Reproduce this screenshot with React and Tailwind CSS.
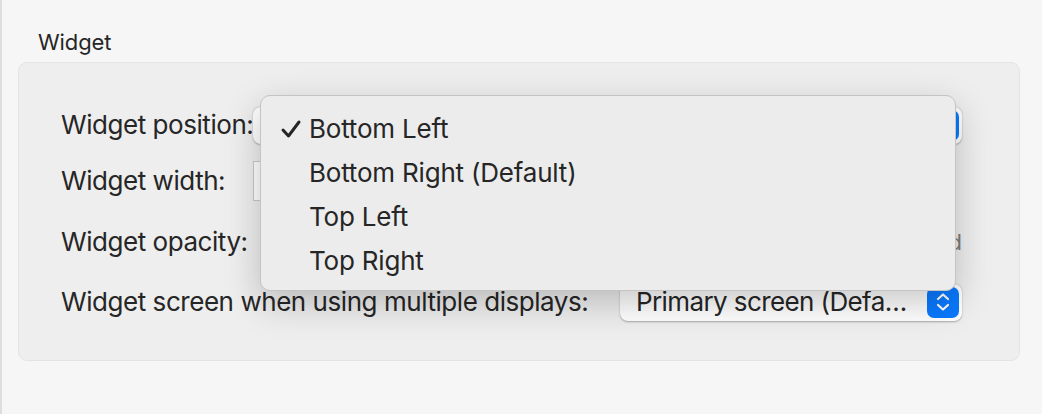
import React from "react";

const font = { fontFamily: 'Inter, "Noto Sans", sans-serif' };

const Stepper = ({ className = "" }) => (
  <div className={`flex h-[31px] w-[32px] shrink-0 items-center justify-center rounded-[7px] bg-[#0a7aff] ${className}`}>
    <svg width="16" height="22" viewBox="0 0 16 22" fill="none">
      <path d="M3 8 L8 3.5 L13 8" stroke="white" strokeWidth="2.2" strokeLinecap="round" strokeLinejoin="round" />
      <path d="M3 14 L8 18.5 L13 14" stroke="white" strokeWidth="2.2" strokeLinecap="round" strokeLinejoin="round" />
    </svg>
  </div>
);

const PopupButton = ({ label, className = "", textClass = "" }) => (
  <div
    className={`flex h-[37px] items-center justify-between gap-[4px] rounded-[8px] bg-white pl-[16px] pr-[3px] shadow-[0_0.5px_2px_rgba(0,0,0,0.3)] ${className}`}
  >
    <span className={`truncate whitespace-nowrap text-[26px] leading-[32px] tracking-[-0.6px] text-[#262626] ${textClass}`}>{label}</span>
    <Stepper />
  </div>
);

const Check = () => (
  <svg width="22" height="20" viewBox="0 0 22 20" fill="none">
    <path d="M3 11 L8.5 17 L19 3" stroke="#262626" strokeWidth="3" strokeLinecap="round" strokeLinejoin="round" />
  </svg>
);

const MenuItem = ({ label, checked }) => (
  <div className="flex h-[44px] items-center">
    <span className="flex w-[48px] shrink-0 items-center pl-[19px]">{checked ? <Check /> : null}</span>
    <span className="whitespace-nowrap text-[26px] leading-[32px] tracking-[-0.2px] text-[#262626]">{label}</span>
  </div>
);

const Label = ({ children, className = "" }) => (
  <span className={`whitespace-nowrap text-[26px] leading-[32px] tracking-[-0.45px] text-[#262626] ${className}`}>{children}</span>
);

export default function App() {
  return (
    <div className="relative h-[414px] w-full overflow-hidden border-l-2 border-[#dedede] bg-[#f6f6f6]" style={font}>
      <div className="pl-[36px] pt-[29px] text-[22px] leading-[26px] tracking-[-0.1px] text-[#262626]">Widget</div>
      <div className="ml-[16px] mr-[22px] mt-[7px] h-[299px] rounded-[9px] border border-[#e4e4e4] bg-[#eeeeee] pl-[42px] pr-[57px] pt-[40px]">
        <div className="flex h-[44px] items-center">
          <Label className="w-[192px] shrink-0">Widget position:</Label>
          <PopupButton label="Bottom Left" className="flex-1" />
        </div>
        <div className="mt-[12px] flex h-[44px] items-center">
          <Label className="w-[192px] shrink-0">Widget width:</Label>
          <div className="h-[40px] w-[120px] border border-[#c9c9c9] bg-white" />
        </div>
        <div className="mt-[17px] flex h-[44px] items-center">
          <Label className="w-[192px] shrink-0">Widget opacity:</Label>
          <div className="flex flex-1 items-center justify-end">
            <span className="text-[22px] leading-[26px] text-[#7a7a7a]">Solid</span>
          </div>
        </div>
        <div className="mt-[16px] flex h-[44px] items-center">
          <Label className="shrink-0">Widget screen when using multiple displays:</Label>
          <PopupButton
            label="Primary screen (Default)"
            className="ml-auto w-[342px]"
            textClass="max-w-[282px]"
          />
        </div>
      </div>

      <div className="absolute left-[258px] top-[95px] w-[696px] rounded-[10px] border border-[#c4c4c4] bg-[#ececec] pt-[11px] pb-[7px] shadow-[0_12px_36px_rgba(0,0,0,0.22)]">
        <MenuItem label="Bottom Left" checked />
        <MenuItem label="Bottom Right (Default)" />
        <MenuItem label="Top Left" />
        <MenuItem label="Top Right" />
      </div>
    </div>
  );
}
